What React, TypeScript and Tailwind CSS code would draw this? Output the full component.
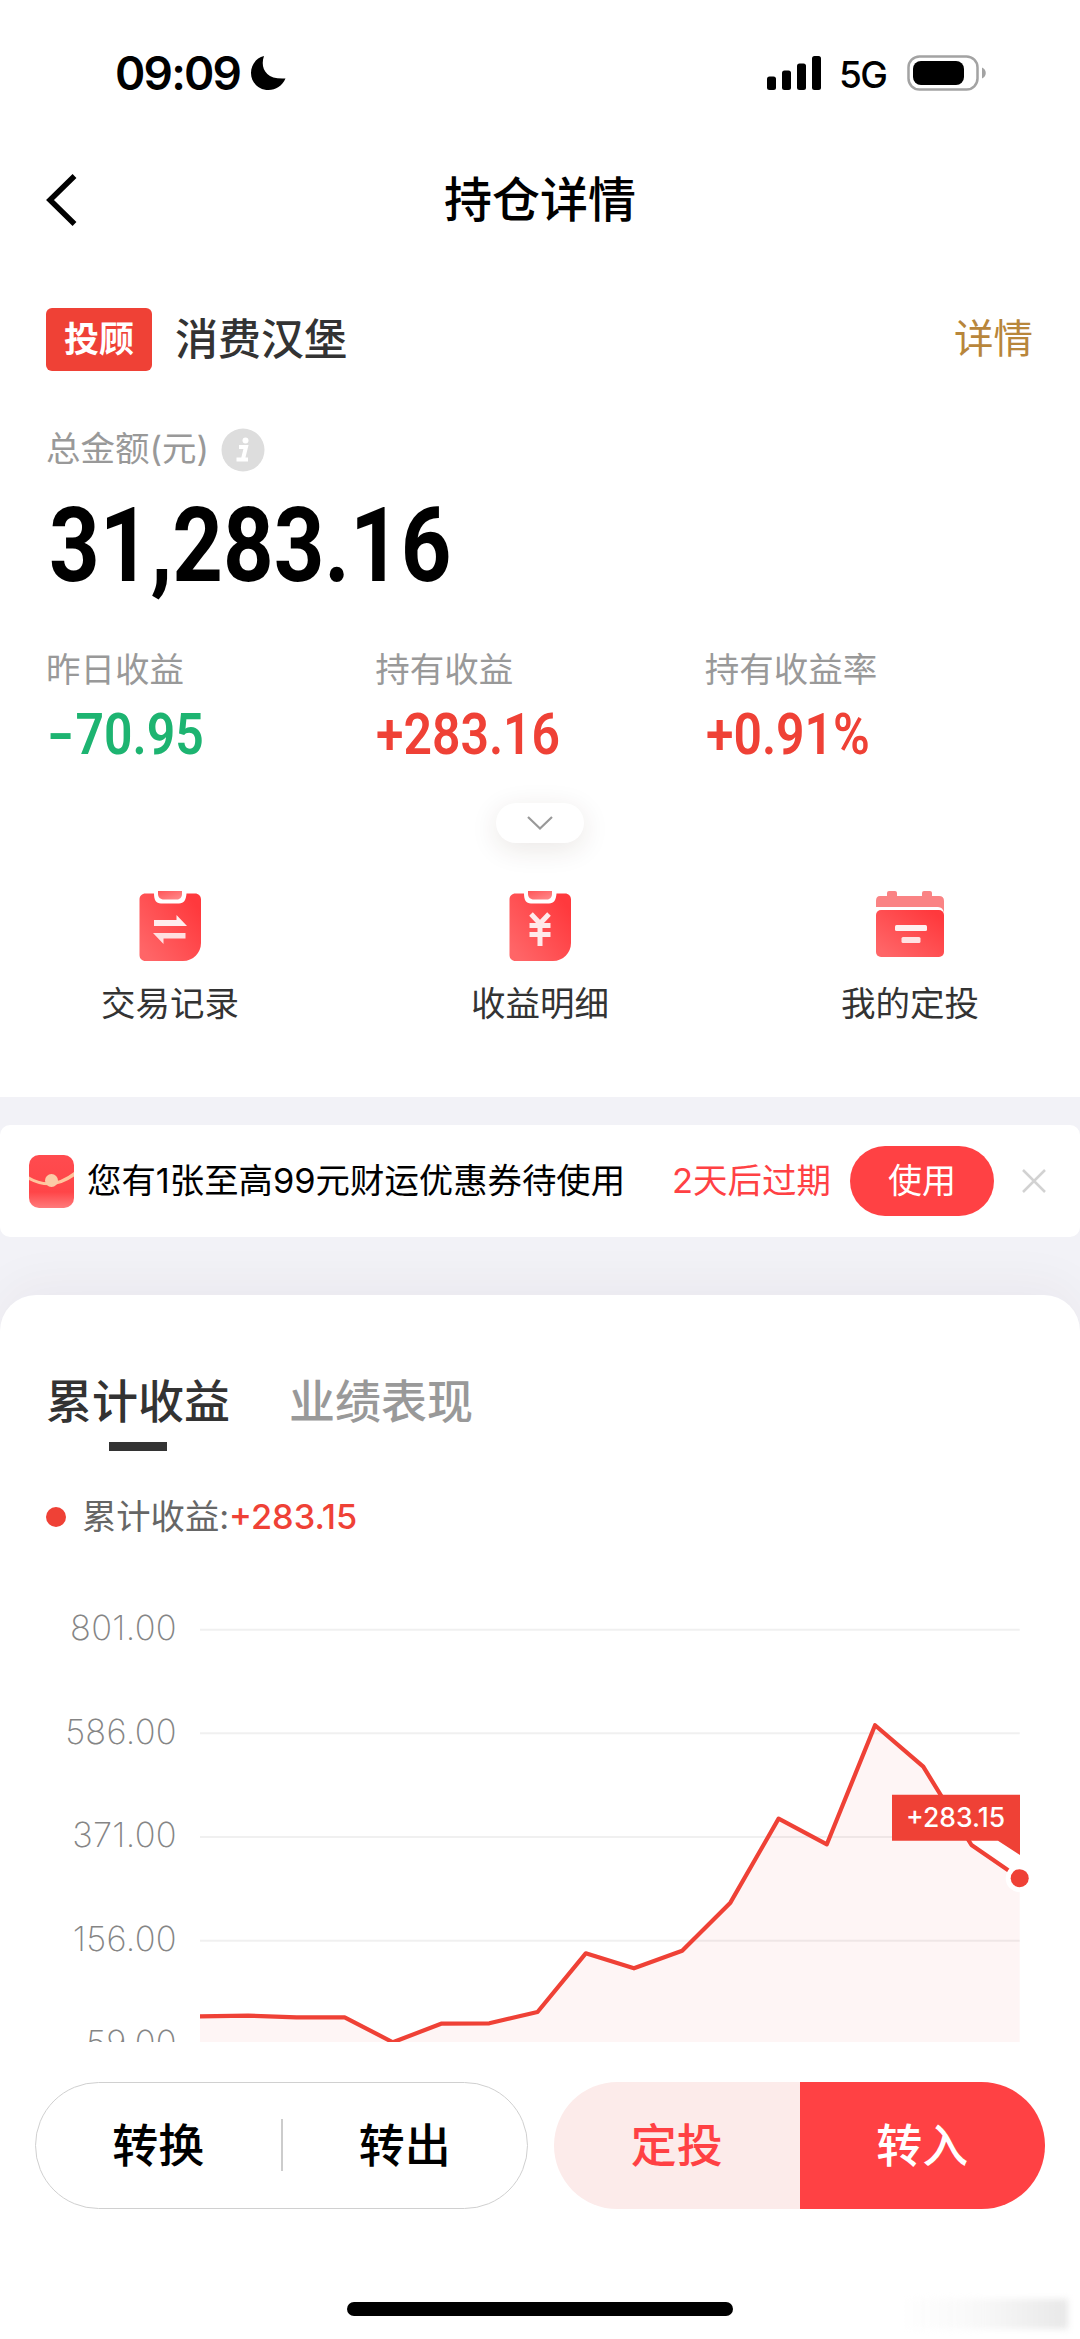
import type { ReactNode } from 'react';

const RED = '#EF4136';

const stats = [
  { label: '昨日收益', sign: '-', value: '70.95', color: 'text-[#1DB471]' },
  { label: '持有收益', sign: '+', value: '283.16', color: 'text-[#EF4136]' },
  { label: '持有收益率', sign: '+', value: '0.91%', color: 'text-[#EF4136]' },
];

const axisTicks = [801, 586, 371, 156, -59];

const profits = [
  -0.8, 0.5, -2.8, -2.8, -54.7, -16.1, -15.3, 8.2, 129.9, 98.8, 135.3, 234.9, 409.1, 356, 602.8, 516.9, 354.5, 285.6,
];

const CHART_LEFT = 200;
const CHART_RIGHT = 1019.7;
const CHART_TOP = 39.7;
const TICK_GAP = 103.67;

const toX = (i: number) => CHART_LEFT + (i * (CHART_RIGHT - CHART_LEFT)) / (profits.length - 1);
const toY = (value: number) => CHART_TOP + ((801 - value) * TICK_GAP) / 215;

function StatusBar() {
  return (
    <div className="flex h-[146px] items-center pl-[115px] pr-[93px]">
      <span className="text-[46px] font-semibold leading-none tracking-[-1.8px]">09:09</span>
      <svg className="ml-[10px]" width="36" height="36" viewBox="0 0 36 36">
        <path d="M14 1C10 12 15 25 35.500 23.500C32 31 26 35 18.500 35C8.500 35 1 27.500 1 18C1 10 6 3 14 1Z" fill="#000" />
      </svg>
      <div className="ml-auto flex items-center">
        <svg width="55" height="34" viewBox="0 0 55 34">
          <rect x="0" y="20.500" width="9" height="13.500" rx="2.500" />
          <rect x="15" y="14.500" width="9" height="19.500" rx="2.500" />
          <rect x="30" y="7.500" width="9" height="26.500" rx="2.500" />
          <rect x="45" y="0" width="9" height="34" rx="2.500" />
        </svg>
        <span className="ml-[17px] mt-[2px] w-[50px] text-[37px] font-medium leading-none tracking-[-1.5px]">5G</span>
        <svg className="ml-[18px]" width="80" height="36" viewBox="0 0 80 36">
          <rect x="1.500" y="1.500" width="69" height="33" rx="11" fill="none" stroke="#A3A3A3" strokeWidth="2.500" />
          <rect x="6" y="6" width="51" height="24" rx="8" fill="#000" />
          <path d="M75 12.500C80 14.500 80 21.500 75 23.500Z" fill="#A3A3A3" />
        </svg>
      </div>
    </div>
  );
}

function NavBar() {
  return (
    <div className="grid h-[108px] grid-cols-[100px_1fr_100px] items-center pb-px">
      <svg className="ml-[45px]" width="34" height="54" viewBox="0 0 34 54">
        <path d="M29.500 3L5 27L29.500 51" fill="none" stroke="#000" strokeWidth="5.500" />
      </svg>
      <h1 className="text-center text-[48px] font-medium leading-none">持仓详情</h1>
    </div>
  );
}

function Clipboard({ id, children }: { id: string; children: ReactNode }) {
  return (
    <svg width="62" height="70" viewBox="0 0 62 70">
      <defs>
        <linearGradient id={id} x1="0.95" y1="0.2" x2="0.1" y2="0.9">
          <stop offset="0" stopColor="#FF393D" />
          <stop offset="1" stopColor="#FF6567" />
        </linearGradient>
        <linearGradient id={`${id}-clip`} x1="0" y1="0" x2="1" y2="1">
          <stop offset="0" stopColor="#FF5558" />
          <stop offset="1" stopColor="#FF8C8D" />
        </linearGradient>
      </defs>
      <path
        d="M6.500 2.500H15C15 9 17 12.500 22 12.500H40C45 12.500 47 9 47.500 2.500H56C59.500 2.500 62 5 62 8.500V52C62 62 54 70 44 70H6.500C3 70 0.500 67.500 0.500 64V8.500C0.500 5 3 2.500 6.500 2.500Z"
        fill={`url(#${id})`}
      />
      <path d="M19 0H43V3C43 6 41 8.500 38 8.500H25C21 8.500 19 6 19 3Z" fill={`url(#${id}-clip)`} />
      {children}
    </svg>
  );
}

function CalendarIcon() {
  return (
    <svg width="70" height="70" viewBox="0 0 70 70">
      <defs>
        <linearGradient id="cal" x1="0.9" y1="0.1" x2="0.1" y2="0.9">
          <stop offset="0" stopColor="#FF393D" />
          <stop offset="1" stopColor="#FF6567" />
        </linearGradient>
      </defs>
      <path
        d="M5 5H12V2Q12 0 14 0H20Q22 0 22 2V5H47V2Q47 0 49 0H55Q57 0 57 2V5H64Q69 5 69 10V22Q68 16 63 16H1V10Q1 5 5 5Z"
        fill="#FA8384"
      />
      <rect x="1" y="19" width="68" height="47" rx="5" fill="url(#cal)" />
      <rect x="20" y="34" width="32" height="6" rx="1.500" fill="#FFF0F0" />
      <rect x="26.500" y="46" width="19" height="6" rx="1.500" fill="#FFE2E3" />
    </svg>
  );
}

const actions = [
  {
    label: '交易记录',
    icon: (
      <Clipboard id="trade">
        <path d="M15 29H37.500V24L48 35H15Z" fill="#FFEDEE" />
        <path d="M14 42H46.500V47.500H24.500V53Z" fill="#FFE0E1" />
      </Clipboard>
    ),
  },
  {
    label: '收益明细',
    icon: (
      <Clipboard id="profit">
        <path
          d="M22 23L31 32.500L40 23M20.500 34.500H41.500M20.500 43.500H41.500M31 32V55"
          fill="none"
          stroke="#FFE9EA"
          strokeWidth="5"
        />
      </Clipboard>
    ),
  },
  { label: '我的定投', icon: <CalendarIcon /> },
];

function Summary() {
  return (
    <section className="h-[843px] px-[46px] pt-[54px]">
      <div className="flex h-[63px] items-center">
        <span className="flex h-[63px] w-[106px] items-center justify-center rounded-md bg-[#EF4136] text-[35px] font-bold leading-none text-white">
          投顾
        </span>
        <span className="ml-[23px] text-[43px] font-medium leading-none text-[#333333]">消费汉堡</span>
        <span className="ml-auto mr-px text-[39.5px] leading-none text-[#B8863B]">详情</span>
      </div>

      <div className="mt-[57px] flex h-[43px] items-center">
        <span className="w-[160px] whitespace-nowrap text-[34.5px] leading-none text-[#999999]">总金额(元)</span>
        <svg className="ml-[15px]" width="44" height="44" viewBox="0 0 44 44">
          <circle cx="22" cy="22" r="21.500" fill="#DDDDDD" />
          <circle cx="24.500" cy="12.500" r="3" fill="#fff" />
          <path d="M18 19H25L22 31M15.500 31.500H27" fill="none" stroke="#fff" strokeWidth="4" />
        </svg>
      </div>

      <div className="ml-[3px] mt-[23px] h-[104px] origin-left scale-x-[0.85] whitespace-nowrap font-['Roboto'] text-[104px] font-bold leading-[104px] text-black">
        31,283.16
      </div>

      <div className="mt-[50px] grid grid-cols-3">
        {stats.map((stat) => (
          <div key={stat.label}>
            <div className="text-[34.5px] leading-[44px] text-[#999999]">{stat.label}</div>
            <div
              className={`ml-px mt-[12px] origin-left scale-x-[0.86] whitespace-nowrap font-['Roboto'] text-[58px] font-semibold leading-[60px] ${stat.color}`}
            >
              <span className={stat.sign === '-' ? 'mr-[12px] inline-block origin-left scale-x-[1.5]' : ''}>{stat.sign}</span>
              {stat.value}
            </div>
          </div>
        ))}
      </div>

      <div className="mt-[39px] flex justify-center">
        <button className="flex h-[40px] w-[88px] items-center justify-center rounded-full bg-white shadow-[0_6px_28px_rgba(60,40,20,0.11)]">
          <svg width="28" height="16" viewBox="0 0 28 16">
            <path d="M2 2L14 13.500L26 2" fill="none" stroke="#999" strokeWidth="2.200" />
          </svg>
        </button>
      </div>

      <div className="mt-[48px] flex justify-between px-[54px]">
        {actions.map((action) => (
          <div key={action.label} className="flex w-[140px] flex-col items-center">
            {action.icon}
            <span className="mt-[21px] whitespace-nowrap text-[34.5px] leading-[44px] text-[#333333]">{action.label}</span>
          </div>
        ))}
      </div>
    </section>
  );
}

function CouponBanner() {
  return (
    <div className="flex h-[112px] items-center rounded-[10px] bg-white pl-[29px]">
      <svg width="45" height="53" viewBox="0 0 45 53">
        <defs>
          <linearGradient id="packet" x1="0" y1="0" x2="0" y2="1">
            <stop offset="0" stopColor="#FF4B4F" />
            <stop offset="0.7" stopColor="#FF4548" />
            <stop offset="1" stopColor="#FF7B7C" />
          </linearGradient>
        </defs>
        <rect width="45" height="53" rx="10" fill="url(#packet)" />
        <path d="M0 21.500Q22 35 45 17V21.500Q23 37 0 25Z" fill="#FFC59D" />
        <circle cx="22.500" cy="25.500" r="6.500" fill="#FBCBA6" />
      </svg>
      <span className="ml-[13px] w-[541px] whitespace-nowrap text-[34.4px] leading-none text-black">
        您有1张至高99元财运优惠券待使用
      </span>
      <span className="ml-[44px] w-[160px] whitespace-nowrap text-[34.5px] leading-none text-[#FF4144]">2天后过期</span>
      <button className="ml-[18px] flex h-[70px] w-[144px] items-center justify-center rounded-full bg-[#FF4144] text-[34px] leading-none text-white">
        使用
      </button>
      <svg className="ml-[27px]" width="26" height="26" viewBox="0 0 26 26">
        <path d="M2 2L24 24M24 2L2 24" stroke="#D2D2D2" strokeWidth="2.500" />
      </svg>
    </div>
  );
}

function ProfitChart() {
  const points = profits.map((value, i) => `${toX(i)},${toY(value)}`).join(' ');
  const lastY = toY(profits[profits.length - 1]);

  return (
    <svg className="mt-[51px] block" width="1080" height="452" viewBox="0 0 1080 452">
      {axisTicks.map((tick) => (
        <g key={tick}>
          <line x1={CHART_LEFT} x2={CHART_RIGHT} y1={toY(tick)} y2={toY(tick)} stroke="#F0F0F0" strokeWidth="2" />
          <text x="177" y={toY(tick) + 10.3} textAnchor="end" fontSize="34.5" fontWeight="200" letterSpacing="0.3" fill="#858585">
            {tick.toFixed(2)}
          </text>
        </g>
      ))}
      <polygon points={`${CHART_LEFT},452 ${points} ${CHART_RIGHT},452`} fill={RED} fillOpacity="0.05" />
      <polyline points={points} fill="none" stroke={RED} strokeWidth="4.2" strokeLinejoin="round" />

      {/* latest value */}
      <circle cx={CHART_RIGHT} cy={lastY} r="14" fill="#fff" />
      <circle cx={CHART_RIGHT} cy={lastY} r="9" fill={RED} />
      <path d="M892 204.700H1020V265L998 250.700H892Z" fill={RED} />
      <text x="955.5" y="237" textAnchor="middle" fontSize="26.5" fontWeight="500" fill="#fff">
        +283.15
      </text>
    </svg>
  );
}

function ProfitCard() {
  return (
    <section className="h-[747px] rounded-t-[36px] bg-white pt-[81px] shadow-[0_-12px_50px_rgba(60,30,40,0.045)]">
      <div className="flex gap-[59px] pl-[46px] text-[46px] font-medium leading-[50px]">
        <div className="flex flex-col items-center text-[#333333]">
          累计收益
          <span className="mt-[16px] h-[9px] w-[58px] bg-[#333333]" />
        </div>
        <div className="text-[#999999]">业绩表现</div>
      </div>

      <div className="mt-[44px] flex h-[44px] items-center pl-[46px] text-[34.3px] leading-none">
        <span className="h-[20px] w-[20px] rounded-full bg-[#EF4136]" />
        <span className="ml-[16px] text-[#666666]">累计收益:</span>
        <span className="font-medium text-[#EF4136]">+283.15</span>
      </div>

      <ProfitChart />
    </section>
  );
}

function BottomBar() {
  return (
    <footer className="relative z-10 flex h-[297px] flex-col items-center bg-white pt-[40px]">
      <div className="flex h-[127px] w-full justify-between px-[35px] text-[46px] font-medium leading-none">
        <div className="flex w-[493px] items-center rounded-full border border-[#D0D0D0] pb-[2px] text-black">
          <button className="flex-1">转换</button>
          <span className="h-[52px] w-[2px] bg-[#CCCCCC]" />
          <button className="flex-1">转出</button>
        </div>
        <div className="flex w-[491px] overflow-hidden rounded-full">
          <button className="flex-1 bg-[#FCEBEA] pb-[2px] text-[#FF4144]">定投</button>
          <button className="flex-1 bg-[#FF4144] pb-[2px] text-white">转入</button>
        </div>
      </div>
      <div className="mt-[93px] h-[14px] w-[386px] rounded-full bg-black" />
      {/* faded mark in the corner */}
      <div className="absolute bottom-[10px] right-[12px] h-[30px] w-[172px] bg-linear-to-r from-transparent via-[#F8F8F8] to-[#E8E8E8] blur-[3px]" />
    </footer>
  );
}

export default function App() {
  return (
    <div className="flex h-[2339px] w-[1080px] flex-col overflow-hidden bg-white font-['Inter','Noto_Sans_CJK_SC',sans-serif] text-black">
      <StatusBar />
      <NavBar />
      <Summary />
      <div className="bg-[#F2F2F7] pt-[28px]">
        <CouponBanner />
        <div className="h-[58px]" />
        <ProfitCard />
      </div>
      <BottomBar />
    </div>
  );
}
